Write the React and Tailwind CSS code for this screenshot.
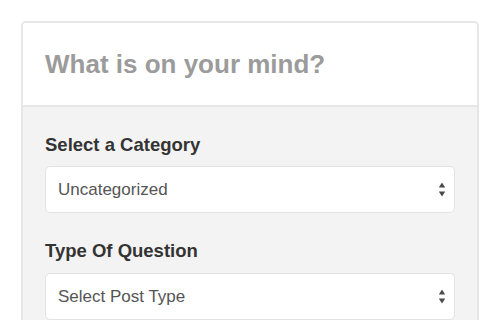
import React from "react";

function Arrows() {
  return (
    <svg width="8" height="16" viewBox="0 0 8 16" className="shrink-0">
      <path d="M4 0.5 L7.2 5.5 L0.8 5.5 Z" fill="#4a4a4a" />
      <path d="M0.8 9.5 L7.2 9.5 L4 14.5 Z" fill="#4a4a4a" />
    </svg>
  );
}

function Select({ text }) {
  return (
    <div className="flex h-[47px] items-center justify-between rounded-[5px] border border-[#e2e2e2] bg-white pl-[12px] pr-[8px]">
      <span className="text-[17px] leading-[19px] text-[#555555]">{text}</span>
      <Arrows />
    </div>
  );
}

export default function App() {
  return (
    <div
      className="min-h-[320px] w-[500px] bg-white pl-[21px] pt-[21px]"
      style={{ fontFamily: '"Liberation Sans", Arial, sans-serif' }}
    >
      <div className="w-[458px] overflow-hidden rounded-t-[5px] border-2 border-b-0 border-[#e6e6e6]">
        <div className="flex h-[84px] items-center border-b-2 border-[#e6e6e6] bg-white px-[22px]">
          <h1 className="text-[26px] font-bold leading-[30px] text-[#9b9b9b]">
            What is on your mind?
          </h1>
        </div>
        <div className="h-[220px] bg-[#f3f3f3] px-[22px] pt-[28px]">
          <div className="text-[18.5px] font-bold leading-[20px] text-[#333333]">
            Select a Category
          </div>
          <div className="mt-[11px]">
            <Select text="Uncategorized" />
          </div>
          <div className="mt-[28px] text-[18.5px] font-bold leading-[20px] text-[#333333]">
            Type Of Question
          </div>
          <div className="mt-[12px]">
            <Select text="Select Post Type" />
          </div>
        </div>
      </div>
    </div>
  );
}
